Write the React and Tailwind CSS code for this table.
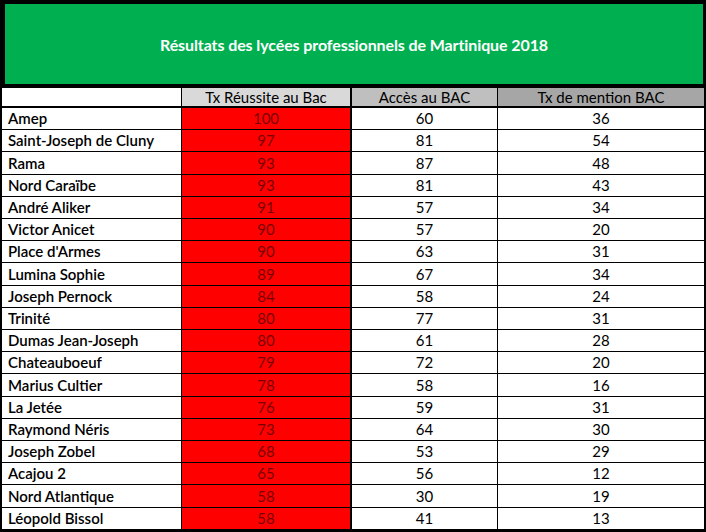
import React from 'react';

const rows = [
  ['Amep', 100, 60, 36],
  ['Saint-Joseph de Cluny', 97, 81, 54],
  ['Rama', 93, 87, 48],
  ['Nord Caraïbe', 93, 81, 43],
  ['André Aliker', 91, 57, 34],
  ['Victor Anicet', 90, 57, 20],
  ["Place d'Armes", 90, 63, 31],
  ['Lumina Sophie', 89, 67, 34],
  ['Joseph Pernock', 84, 58, 24],
  ['Trinité', 80, 77, 31],
  ['Dumas Jean-Joseph', 80, 61, 28],
  ['Chateauboeuf', 79, 72, 20],
  ['Marius Cultier', 78, 58, 16],
  ['La Jetée', 76, 59, 31],
  ['Raymond Néris', 73, 64, 30],
  ['Joseph Zobel', 68, 53, 29],
  ['Acajou 2', 65, 56, 12],
  ['Nord Atlantique', 58, 30, 19],
  ['Léopold Bissol', 58, 41, 13],
];

const label = { fontFamily: 'Lato, "Open Sans", sans-serif' };

export default function App() {
  return (
    <div className="w-[706px] h-[532px] flex flex-col bg-white text-black" style={label}>
      {/* Title */}
      <div className="h-[88px] shrink-0 border-t-4 border-b-4 border-l-[5px] border-r-[3px] border-black bg-[#00b050] flex items-center justify-center">
        <h1 className="text-white font-bold text-[16px] tracking-[-0.1px] mt-[2px]">
          Résultats des lycées professionnels de Martinique 2018
        </h1>
      </div>

      <div className="flex-1 flex flex-col border-l-2 border-r-2 border-b-[3px] border-black">
        {/* Header */}
        <div className="h-[20px] shrink-0 grid grid-cols-[180px_170px_146px_1fr] border-b-2 border-black text-[15px] leading-none">
          <div className="border-r border-black bg-white" />
          <div className="border-r-2 border-black bg-[#d9d9d9] flex items-center justify-center">Tx Réussite au Bac</div>
          <div className="border-r border-black bg-[#bfbfbf] flex items-center justify-center">Accès au BAC</div>
          <div className="bg-[#a6a6a6] flex items-center justify-center">Tx de mention BAC</div>
        </div>

        {/* Body */}
        <div className="flex-1 flex flex-col">
          {rows.map(([name, tx, acces, mention], i) => (
            <div
              key={name}
              className={`flex-1 grid grid-cols-[180px_170px_146px_1fr] text-[15px] leading-none ${
                i < rows.length - 1 ? 'border-b border-black' : ''
              }`}
            >
              <div className="border-r border-black flex items-center pl-[6px] font-semibold">{name}</div>
              <div className="border-r-2 border-black bg-[#ff0000] text-[#7a0000] flex items-center justify-center">{tx}</div>
              <div className="border-r border-black flex items-center justify-center">{acces}</div>
              <div className="flex items-center justify-center">{mention}</div>
            </div>
          ))}
        </div>
      </div>
    </div>
  );
}
